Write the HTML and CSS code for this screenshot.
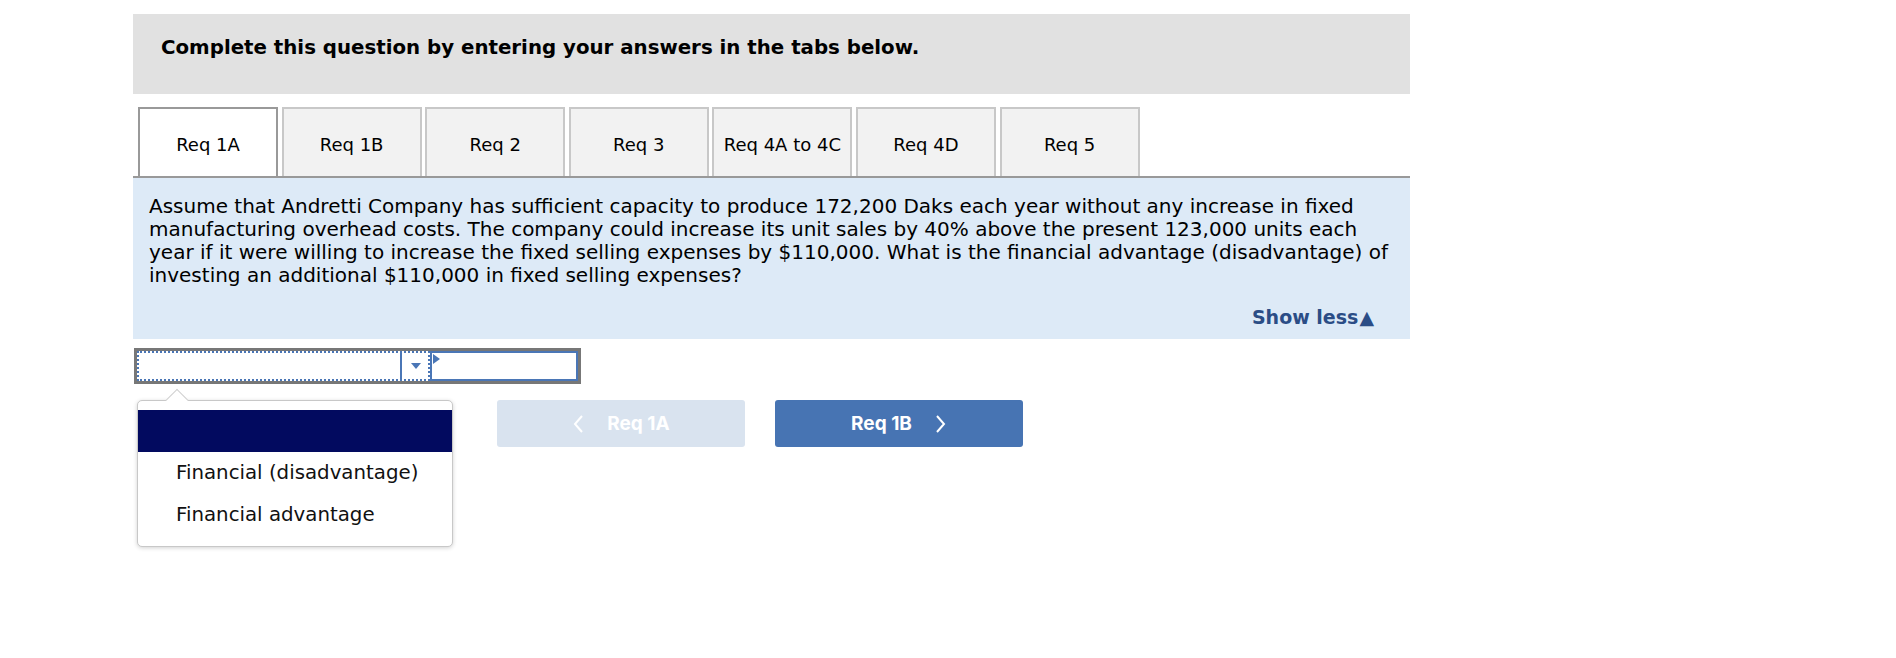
FILE: index.html
```html
<!DOCTYPE html>
<html>
<head>
<meta charset="utf-8">
<link rel="stylesheet" href="styles.css">
</head>
<body>
<div class="wrap">
  <div class="banner">Complete this question by entering your answers in the tabs below.</div>
  <div class="tabs">
    <div class="tab active">Req 1A</div>
    <div class="tab">Req 1B</div>
    <div class="tab">Req 2</div>
    <div class="tab">Req 3</div>
    <div class="tab">Req 4A to 4C</div>
    <div class="tab">Req 4D</div>
    <div class="tab">Req 5</div>
  </div>
  <div class="question">
    <p class="qtext">Assume that Andretti Company has sufficient capacity to produce 172,200 Daks each year without any increase in fixed<br>manufacturing overhead costs. The company could increase its unit sales by 40% above the present 123,000 units each<br>year if it were willing to increase the fixed selling expenses by $110,000. What is the financial advantage (disadvantage) of<br>investing an additional $110,000 in fixed selling expenses?</p>
    <div class="showless">Show less<span class="tri">&#9650;</span></div>
  </div>
  <div class="answer">
    <div class="control">
      <div class="select">
        <div class="divider"></div>
        <div class="caret"></div>
      </div>
      <div class="input"><span class="pointer"></span></div>
    </div>
    <div class="menu">
      <div class="notch"></div>
      <div class="opt selected"></div>
      <div class="opt">Financial (disadvantage)</div>
      <div class="opt">Financial advantage</div>
    </div>
  </div>
  <div class="nav">
    <div class="btn disabled">
      <svg class="chev" width="12" height="20" viewBox="0 0 12 20"><path d="M10 2 L3 10 L10 18" fill="none" stroke="#fff" stroke-width="2"/></svg>
      <span>Req 1A</span>
    </div>
    <div class="btn primary">
      <span>Req 1B</span>
      <svg class="chev" width="12" height="20" viewBox="0 0 12 20"><path d="M2 2 L9 10 L2 18" fill="none" stroke="#fff" stroke-width="2"/></svg>
    </div>
  </div>
</div>
</body>
</html>
```

FILE: styles.css
```css
* { box-sizing: border-box; }
html, body { min-height: 658px; }
body {
  margin: 0;
  background: #fff;
  font-family: "DejaVu Sans", Verdana, sans-serif;
  color: #000;
}
.wrap {
  margin: 14px 0 0 133px;
  width: 1277px;
  min-height: 600px;
}
.banner {
  height: 80px;
  background: #e1e1e1;
  padding: 22px 0 0 28px;
  font-weight: bold;
  font-size: 19.8px;
  line-height: 24px;
}
.tabs {
  display: flex;
  gap: 3.6px;
  margin-top: 13px;
  padding-left: 5px;
  border-bottom: 2px solid #999;
}
.tab {
  width: 140px;
  height: 69px;
  background: #f2f2f2;
  border: 2px solid #c8c8c8;
  border-bottom: none;
  display: flex;
  align-items: center;
  justify-content: center;
  font-size: 18px;
  padding-top: 4px;
}
.tab.active {
  background: #fff;
  border-color: #999;
}
.question {
  background: #ddeaf7;
  height: 161px;
  padding: 17px 16px 0 16px;
  display: flex;
  flex-direction: column;
}
.qtext {
  margin: 0;
  font-size: 20px;
  line-height: 23px;
  white-space: nowrap;
}
.showless {
  margin-top: auto;
  margin-bottom: 11px;
  align-self: flex-end;
  margin-right: 20px;
  color: #2b4d86;
  font-weight: bold;
  font-size: 19px;
}
.tri { font-size: 19px; margin-left: 1px; }
.answer {
  position: relative;
  margin-top: 9px;
  height: 36px;
}
.control {
  display: flex;
  margin-left: 1px;
  width: 447px;
  height: 36px;
  border: 3px solid #777;
}
.select {
  position: relative;
  width: 293px;
  height: 30px;
  border: 2px dotted #4a76b6;
}
.divider {
  position: absolute;
  left: 261px;
  top: -2px;
  width: 2px;
  height: 30px;
  background: #4a76b6;
}
.caret {
  position: absolute;
  left: 272px;
  top: 10px;
  width: 0;
  height: 0;
  border-left: 5px solid transparent;
  border-right: 5px solid transparent;
  border-top: 6px solid #4a76b6;
}
.input {
  position: relative;
  flex: 1;
  border: 2px solid #4a76b6;
}
.pointer {
  position: absolute;
  left: 1px;
  top: 1px;
  width: 0;
  height: 0;
  border-top: 5px solid transparent;
  border-bottom: 5px solid transparent;
  border-left: 7px solid #4a76b6;
}
.menu {
  position: absolute;
  left: 4px;
  top: 52px;
  width: 316px;
  background: #fff;
  border: 1px solid #c8c8c8;
  border-radius: 5px;
  box-shadow: 0 1px 4px rgba(0,0,0,0.18);
  padding: 9px 0 10px;
  z-index: 5;
}
.notch {
  position: absolute;
  left: 31px;
  top: -9px;
  width: 16px;
  height: 16px;
  background: #fff;
  border-top: 1px solid #d0d0d0;
  border-left: 1px solid #d0d0d0;
  transform: rotate(45deg);
  transform-origin: center;
}
.opt {
  position: relative;
  height: 42px;
  line-height: 42px;
  padding-left: 38px;
  font-size: 19.8px;
  color: #111;
}
.opt.selected {
  background: #020a5f;
}
.nav {
  display: flex;
  gap: 30px;
  margin: 16px 0 0 364px;
}
.btn {
  width: 248px;
  height: 47px;
  border-radius: 3px;
  display: flex;
  align-items: center;
  justify-content: center;
  gap: 23px;
  color: #fff;
  font-family: Inter, "Liberation Sans", sans-serif;
  font-weight: bold;
  font-size: 19px;
}
.btn.disabled { background: #d9e3ef; }
.btn.primary { background: #4774b3; }
```
